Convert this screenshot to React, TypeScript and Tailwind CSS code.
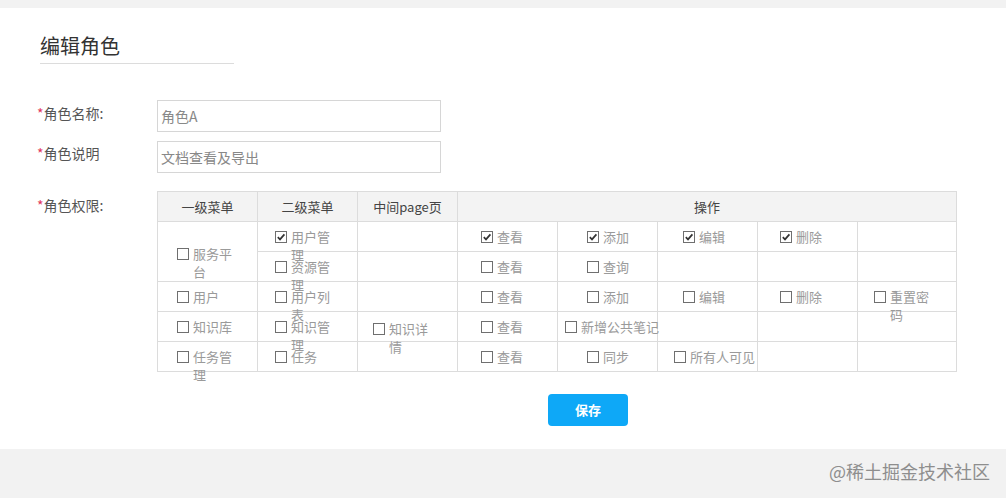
type CellDef = {
  label?: string;
  checked?: boolean;
  wrap?: boolean;
  pad?: string;
  top?: string;
  span?: boolean;
};

const rows: CellDef[][] = [
  [
    { label: "服务平台", wrap: true, pad: "pl-[19px]", top: "pt-[23px]", span: true },
    { label: "用户管理", checked: true, wrap: true, pad: "pl-[17px]" },
    {},
    { label: "查看", checked: true, pad: "pl-[23px]" },
    { label: "添加", checked: true, pad: "pl-[29px]" },
    { label: "编辑", checked: true, pad: "pl-[25px]" },
    { label: "删除", checked: true, pad: "pl-[22px]" },
    {},
  ],
  [
    { label: "资源管理", wrap: true, pad: "pl-[17px]" },
    {},
    { label: "查看", pad: "pl-[23px]" },
    { label: "查询", pad: "pl-[29px]" },
    {},
    {},
    {},
  ],
  [
    { label: "用户", pad: "pl-[19px]" },
    { label: "用户列表", wrap: true, pad: "pl-[17px]" },
    {},
    { label: "查看", pad: "pl-[23px]" },
    { label: "添加", pad: "pl-[29px]" },
    { label: "编辑", pad: "pl-[25px]" },
    { label: "删除", pad: "pl-[22px]" },
    { label: "重置密码", wrap: true, pad: "pl-[16px]" },
  ],
  [
    { label: "知识库", pad: "pl-[19px]" },
    { label: "知识管理", wrap: true, pad: "pl-[17px]" },
    { label: "知识详情", wrap: true, pad: "pl-[15px]", top: "pt-[8px]" },
    { label: "查看", pad: "pl-[23px]" },
    { label: "新增公共笔记", pad: "pl-[7px]" },
    {},
    {},
    {},
  ],
  [
    { label: "任务管理", wrap: true, pad: "pl-[19px]" },
    { label: "任务", pad: "pl-[17px]" },
    {},
    { label: "查看", pad: "pl-[23px]" },
    { label: "同步", pad: "pl-[29px]" },
    { label: "所有人可见", pad: "pl-[16px]" },
    {},
    {},
  ],
];

function CheckBox({ checked }: { checked?: boolean }) {
  return (
    <span className="mt-[3px] mr-[4px] flex h-[12px] w-[12px] shrink-0 items-center justify-center border border-[#6f6f6f] bg-white">
      {checked && (
        <svg width="10" height="10" viewBox="0 0 10 10">
          <path d="M1.8 5.2 L4 7.4 L8.4 2.4" fill="none" stroke="#333" strokeWidth="1.7" />
        </svg>
      )}
    </span>
  );
}

function Cell({ cell }: { cell: CellDef }) {
  return (
    <div
      className={`border-r border-b border-[#dcdcdc] ${cell.span ? "row-span-2" : ""} ${cell.top ?? "pt-[6px]"} ${cell.pad ?? ""}`}
    >
      {cell.label && (
        <div className="flex items-start text-[13px] leading-[18px] text-[#9a9a9a]">
          <CheckBox checked={cell.checked} />
          <span className={cell.wrap ? "block w-[40px]" : "whitespace-nowrap"}>{cell.label}</span>
        </div>
      )}
    </div>
  );
}

export default function App() {
  const head = "flex items-center justify-center border-r border-b border-[#dcdcdc] bg-[#f3f3f3] text-[13px] text-[#444]";

  return (
    <div className="flex h-[498px] w-full flex-col bg-[#f2f2f2] font-['Noto_Sans_CJK_SC',sans-serif]">
      <div className="mt-[8px] h-[441px] bg-white pl-[37px] pt-[24px]">
        <div className="ml-[3px] w-[194px] border-b border-[#dcdcdc] pb-[3px] text-[20px] leading-[28px] text-[#333]">
          编辑角色
        </div>

        <div className="mt-[36px] flex">
          <div className="w-[120px] pt-[3px] text-[14px] leading-[20px] text-[#555]">
            <span className="text-[#e2365c]">*</span>角色名称:
          </div>
          <div className="flex h-[32px] w-[284px] items-center border border-[#d6d6d6] px-[3px] text-[14px] text-[#888]">
            角色A
          </div>
        </div>

        <div className="mt-[9px] flex">
          <div className="w-[120px] pt-[2px] text-[14px] leading-[20px] text-[#555]">
            <span className="text-[#e2365c]">*</span>角色说明
          </div>
          <div className="flex h-[32px] w-[284px] items-center border border-[#d6d6d6] px-[3px] text-[14px] text-[#888]">
            文档查看及导出
          </div>
        </div>

        <div className="mt-[18px] flex">
          <div className="w-[120px] pt-[4px] text-[14px] leading-[20px] text-[#555]">
            <span className="text-[#e2365c]">*</span>角色权限:
          </div>
          <div>
            <div className="grid grid-cols-[repeat(7,100px)_99px] grid-rows-[30px_30px_30px_30px_30px_30px] border-t border-l border-[#dcdcdc]">
              <div className={head}>一级菜单</div>
              <div className={head}>二级菜单</div>
              <div className={head}>中间page页</div>
              <div className={`${head} col-span-5`}>操作</div>
              {rows.map((row, ri) => row.map((cell, ci) => <Cell key={`${ri}-${ci}`} cell={cell} />))}
            </div>
            <button className="mt-[22px] ml-[391px] h-[32px] w-[80px] rounded-[4px] bg-[#0ea8f7] text-[13px] font-bold text-white">
              保存
            </button>
          </div>
        </div>
      </div>

      <div className="flex flex-1 items-center justify-end pr-[16px] pb-[4px] text-[18px] text-[#8e8e8e]">
        @稀土掘金技术社区
      </div>
    </div>
  );
}
